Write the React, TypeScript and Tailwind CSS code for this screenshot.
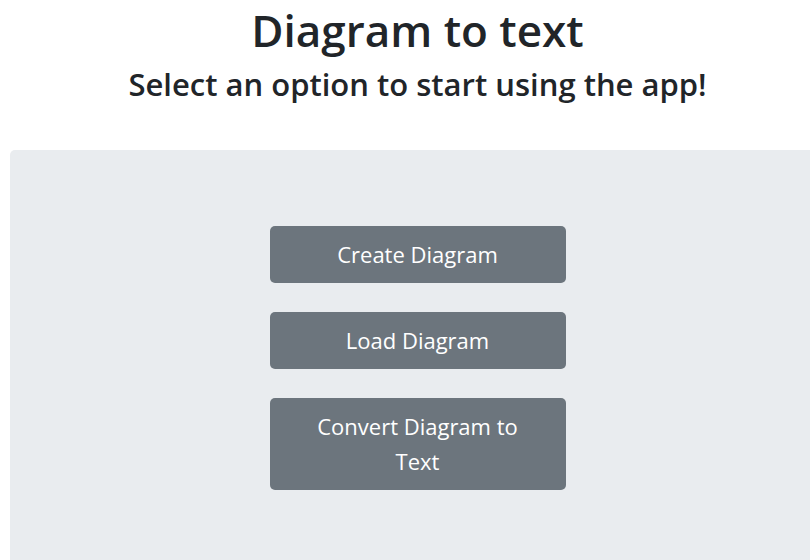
import React from "react";

const options = ["Create Diagram", "Load Diagram", "Convert Diagram to Text"];

const App: React.FC = () => {
  const handleSelect = (option: string) => {
    console.log("selected", option);
  };

  return (
    <div
      className="w-[810px] h-[560px] overflow-hidden bg-white text-[#212529]"
      style={{ fontFamily: '"Open Sans", "Noto Sans", sans-serif' }}
    >
      <div className="w-[825px] pl-[10px]">
        <h1 className="text-center text-[44px] leading-[60px] font-semibold">
          Diagram to text
        </h1>
        <h3 className="text-center text-[31px] leading-[38px] font-semibold mt-[5px]">
          Select an option to start using the app!
        </h3>
        <div className="mt-[47px] bg-[#e9ecef] rounded-[5px] pt-[76px] pb-[90px]">
          <div className="flex flex-col items-center gap-[29px]">
            {options.map((option) => (
              <button
                key={option}
                onClick={() => handleSelect(option)}
                className="w-[296px] bg-[#6c757d] text-white text-[22px] leading-[35px] rounded-[5px] px-[40px] py-[11px] text-center"
              >
                {option}
              </button>
            ))}
          </div>
        </div>
      </div>
    </div>
  );
};

export default App;
